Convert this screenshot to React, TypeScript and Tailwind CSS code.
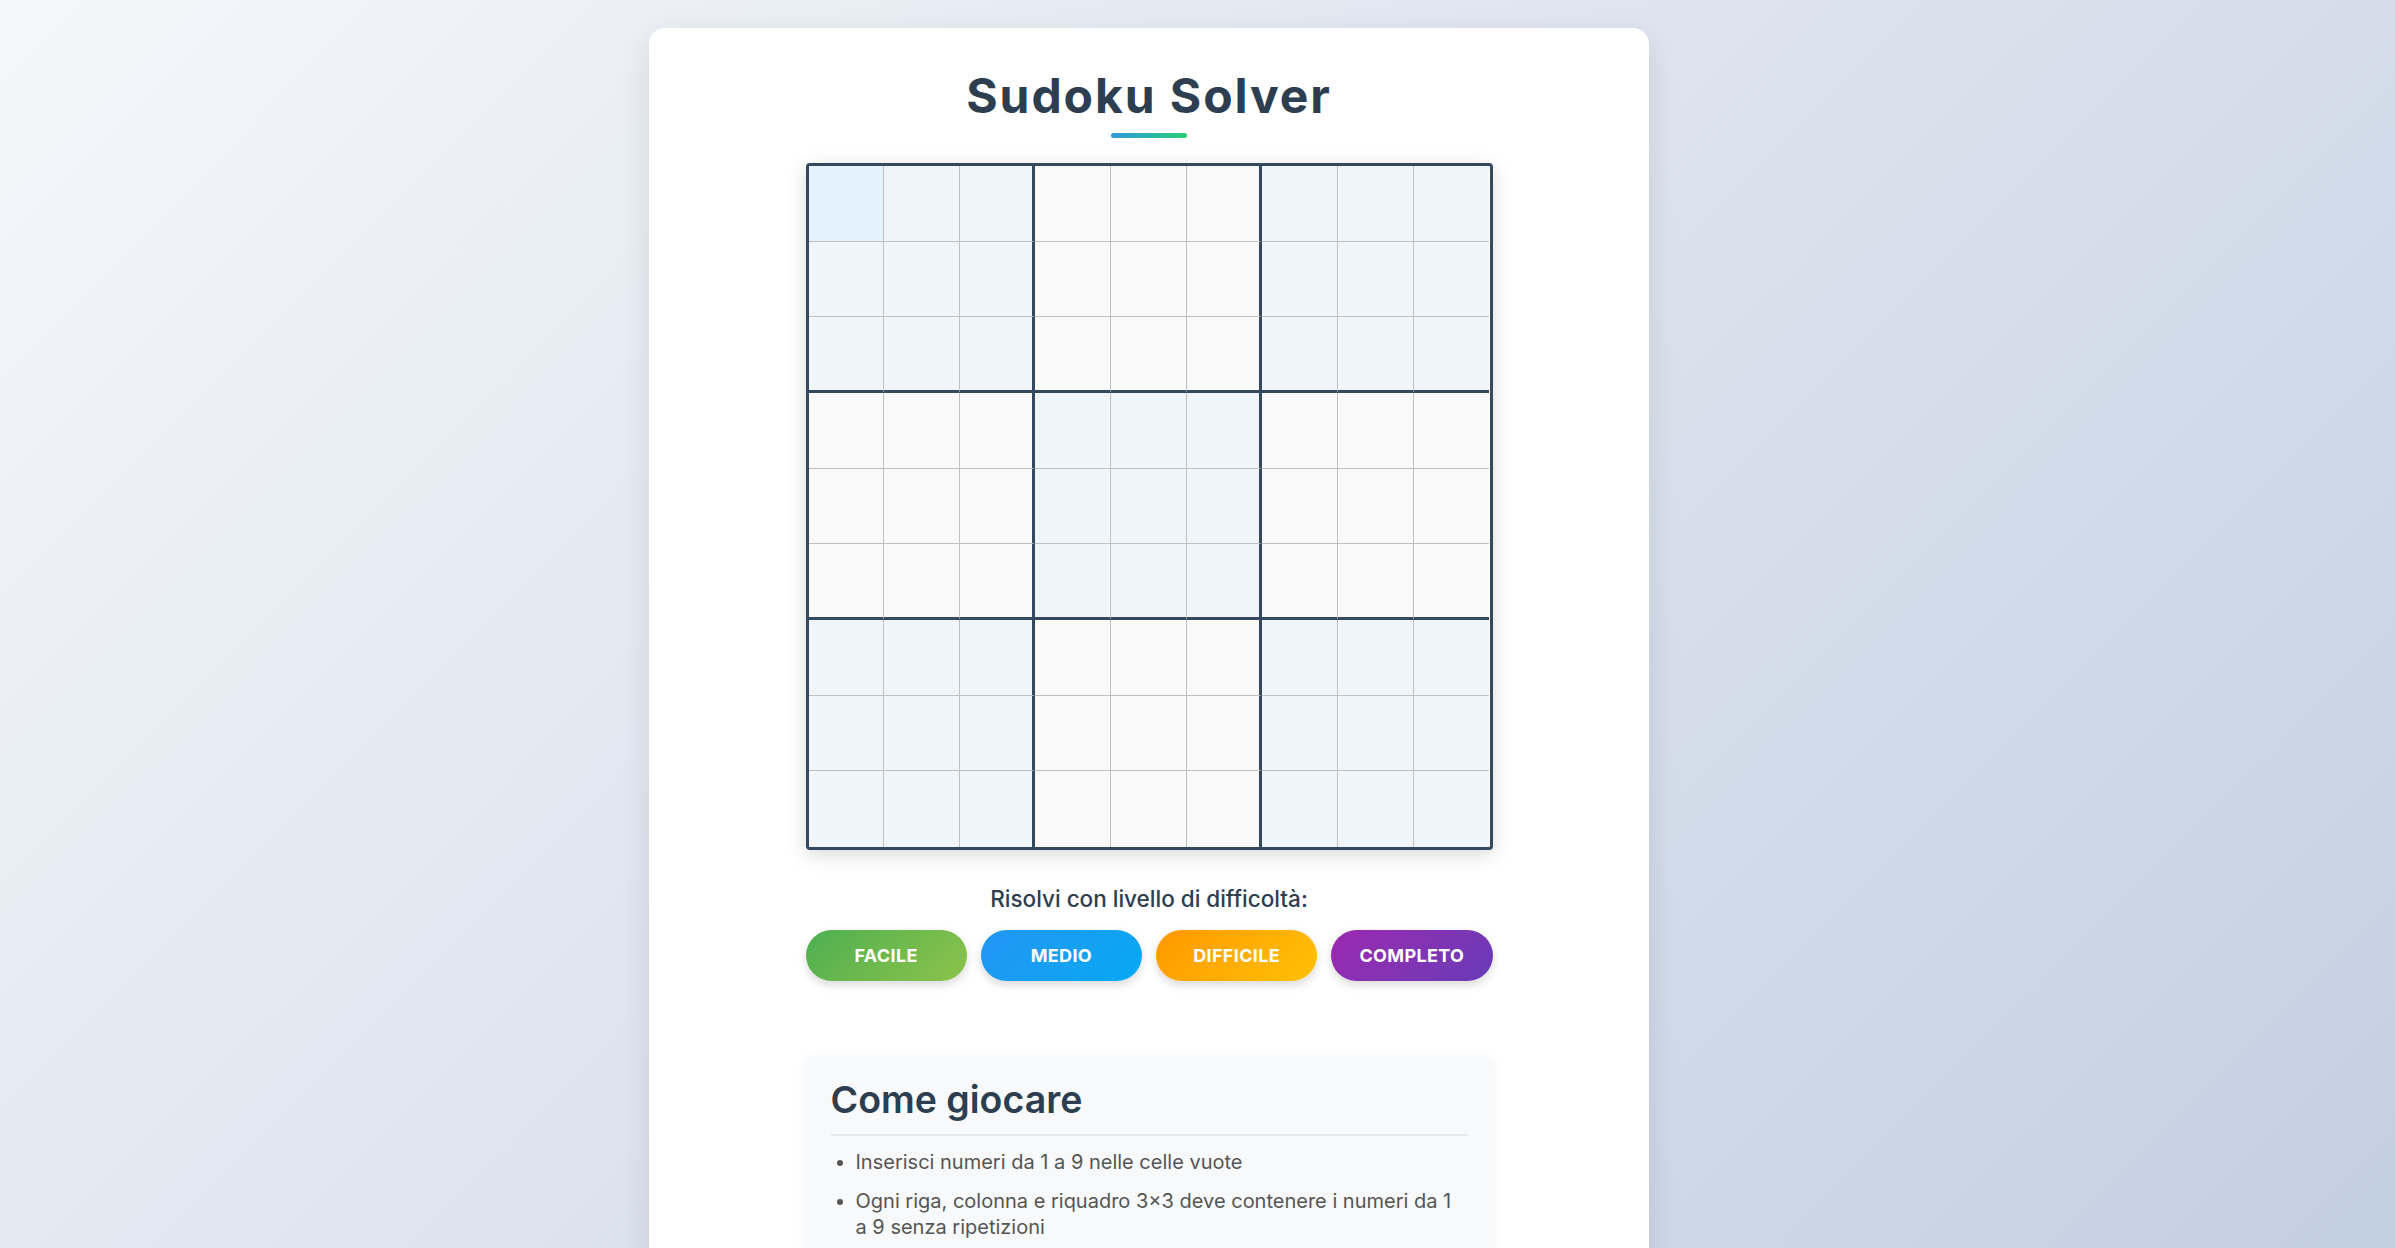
import React from "react";

const rules = [
  "Inserisci numeri da 1 a 9 nelle celle vuote",
  "Ogni riga, colonna e riquadro 3×3 deve contenere i numeri da 1 a 9 senza ripetizioni",
  "Scegli un livello di difficoltà per ricevere un aiuto",
  "Premi Completo per vedere la soluzione intera",
];

const levels = [
  { label: "Facile", cls: "from-[#4caf50] to-[#8bc34a]" },
  { label: "Medio", cls: "from-[#2196f3] to-[#03a9f4]" },
  { label: "Difficile", cls: "from-[#ff9800] to-[#ffc107]" },
  { label: "Completo", cls: "from-[#9c27b0] to-[#673ab7]" },
];

function Cell({ r, c }: { r: number; c: number }) {
  const box = Math.floor(r / 3) * 3 + Math.floor(c / 3);
  const bg =
    r === 0 && c === 0
      ? "bg-[#e3f2fd]"
      : box % 2 === 0
      ? "bg-[#f0f5fa]"
      : "bg-[#f9f9f9]";
  const right =
    c === 8
      ? ""
      : c === 2 || c === 5
      ? "border-r-[3px] border-r-[#34495e]"
      : "border-r border-r-[#c0c0c0]";
  const bottom =
    r === 8
      ? ""
      : r === 2 || r === 5
      ? "border-b-[3px] border-b-[#34495e]"
      : "border-b border-b-[#c0c0c0]";
  return <div className={`${bg} ${right} ${bottom}`} />;
}

function Board() {
  const cells = [];
  for (let r = 0; r < 9; r++) {
    for (let c = 0; c < 9; c++) {
      cells.push(<Cell key={`${r}-${c}`} r={r} c={c} />);
    }
  }
  return (
    <div className="w-[687px] h-[687px] border-[3px] border-[#34495e] rounded-[4px] overflow-hidden shadow-[0_5px_20px_rgba(0,0,0,0.15)] grid grid-cols-9 grid-rows-9 bg-white">
      {cells}
    </div>
  );
}

export default function App() {
  return (
    <div className="h-screen overflow-hidden bg-[linear-gradient(135deg,#f5f7fa_0%,#c3cfe2_100%)] font-['Inter','Noto_Sans',sans-serif]">
      <div className="flex justify-center pt-[28px] pr-[97px]">
        <div className="w-[1000px] bg-white rounded-[16px] shadow-[0_10px_30px_rgba(0,0,0,0.1)] pt-[40px] pb-[60px]">
          <div className="w-[687px] mx-auto flex flex-col items-center">
            <h1 className="text-[48px] leading-[56px] font-bold tracking-[0.04em] text-[#2c3e50]">
              Sudoku Solver
            </h1>
            <div className="mt-[9px] w-[76px] h-[5px] rounded-full bg-linear-to-r from-[#3498db] to-[#2ecc71]" />

            <div className="mt-[25px]">
              <Board />
            </div>

            <p className="mt-[35px] text-[22.5px] leading-[27px] font-medium text-[#2c3e50]">
              Risolvi con livello di difficoltà:
            </p>
            <div className="mt-[18px] w-full grid grid-cols-4 gap-[14px]">
              {levels.map((l) => (
                <button
                  key={l.label}
                  className={`h-[51px] rounded-full bg-linear-135 ${l.cls} text-white text-[18px] font-bold uppercase tracking-[0.02em] shadow-[0_4px_10px_rgba(0,0,0,0.15)]`}
                >
                  {l.label}
                </button>
              ))}
            </div>

            <div className="mt-[74px] w-full bg-[#f8f9fa] rounded-[10px] shadow-[0_2px_12px_rgba(0,0,0,0.05)] p-[25px]">
              <h2 className="text-[37.5px] leading-[40px] font-semibold text-[#2c3e50] pb-[14px] border-b-2 border-[#e6e9ed]">
                Come giocare
              </h2>
              <ul className="mt-[13px] list-disc pl-[25px] pr-[8px] text-[20px] leading-[26px] text-[#555] marker:text-[#555]">
                {rules.map((t) => (
                  <li key={t} className="mb-[13px]">
                    {t}
                  </li>
                ))}
              </ul>
            </div>
          </div>
        </div>
      </div>
    </div>
  );
}
